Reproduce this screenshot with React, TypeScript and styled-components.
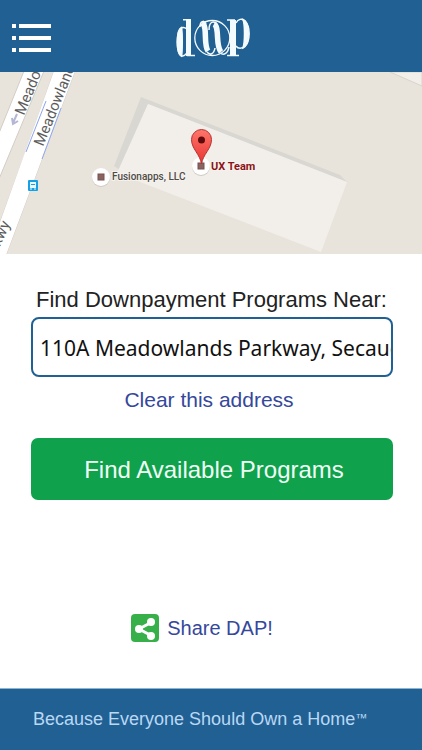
import React from "react";
import styled, { createGlobalStyle } from "styled-components";

const GlobalStyle = createGlobalStyle`
  * { box-sizing: border-box; }
  body { margin: 0; background: #fff; font-family: "Liberation Sans", Arial, sans-serif; }
`;

const Page = styled.div`
  min-height: 100vh;
  display: flex;
  flex-direction: column;
`;

const Header = styled.header`
  height: 72px;
  display: grid;
  grid-template-columns: 1fr auto 1fr;
  align-items: center;
  padding: 4px 12px 0;
  background: #216093;
`;

const MenuButton = styled.button`
  justify-self: start;
  display: flex;
  padding: 0;
  border: 0;
  background: none;
  cursor: pointer;
`;

const Logo = styled.svg`
  display: block;
`;

const MapView = styled.svg`
  display: block;
  width: 100%;
  height: 182px;
  background: #e8e4dc;
`;

const MapLabel = styled.text`
  font-family: Roboto, sans-serif;
  font-size: 10px;
  font-weight: 500;
  fill: #4f4b48;
  stroke: #f5f2ed;
  stroke-width: 2px;
  paint-order: stroke;
`;

const SelectedLabel = styled(MapLabel)`
  font-size: 11px;
  font-weight: 700;
  fill: #8c1318;
`;

const StreetLabel = styled.text`
  font-family: Roboto, sans-serif;
  font-size: 15px;
  fill: #5c5c5c;
`;

const Main = styled.main`
  flex: 1;
  display: flex;
  flex-direction: column;
  align-items: center;
  padding: 31px 29px 44px 31px;
`;

const SearchForm = styled.form`
  width: 100%;
  display: flex;
  flex-direction: column;
  align-items: center;
`;

const AddressLabel = styled.label`
  align-self: flex-start;
  padding-left: 5px;
  font-size: 22px;
  line-height: 30px;
  color: #222;
  white-space: nowrap;
  margin-bottom: 2px;
`;

const AddressInput = styled.input`
  width: 100%;
  height: 60px;
  padding: 2px 0 0 7px;
  border: 2px solid #216093;
  border-radius: 8px;
  background: #fff;
  color: #111;
  font-family: "Noto Sans", sans-serif;
  font-size: 21px;
`;

const ClearButton = styled.button`
  margin: 9px 0 24px;
  padding: 0 6px 0 0;
  border: 0;
  background: none;
  color: #35489b;
  font-family: inherit;
  font-size: 21px;
  line-height: 28px;
  cursor: pointer;
`;

const FindButton = styled.button`
  width: 100%;
  height: 62px;
  border: 0;
  border-radius: 7px;
  padding: 2px 0 0 4px;
  background: #0fa14c;
  color: #f0fff5;
  font-family: inherit;
  font-size: 24px;
  cursor: pointer;
`;

const ShareLink = styled.a`
  margin-top: auto;
  padding-right: 20px;
  display: flex;
  align-items: center;
  gap: 8px;
  color: #35489b;
  font-size: 20px;
  line-height: 32px;
  text-decoration: none;
`;

const Footer = styled.footer`
  height: 62px;
  padding-left: 33px;
  border-top: 1px solid #8db4d3;
  background: #216093;
  color: #b9d8f4;
  font-size: 18px;
  line-height: 60px;
  white-space: nowrap;
`;

const TradeMark = styled.sup`
  font-size: 12px;
  line-height: 0;
  vertical-align: 3px;
`;

function MenuIcon() {
  return (
    <svg width="39" height="28" viewBox="0 0 39 28" fill="#fff" aria-hidden="true">
      {[0, 12, 24].map((y) => (
        <g key={y}>
          <rect x="0" y={y} width="4" height="4" />
          <rect x="7" y={y} width="32" height="4" />
        </g>
      ))}
    </svg>
  );
}

function BrandMark() {
  return (
    <Logo width="78" height="40" viewBox="0 0 78 40" role="img" aria-label="DAP" fill="none" stroke="#f4fbff">
      <circle cx="40.300" cy="20" r="17.500" strokeWidth="1.300" />
      <path d="M15 11C12 8.500 9 9 7.500 12C4.500 18 4.500 30 7.500 36C9 39 12 38.500 15 35" strokeWidth="1.500" />
      <path d="M9.500 9.500C4 12 4 36 9.500 38.300C10.500 34 10.500 14 9.500 9.500Z" fill="#f4fbff" strokeWidth="1.500" />
      <rect x="14" y="1" width="5" height="37" fill="#f4fbff" stroke="none" />
      <path d="M11 1.700H19M15 37.500H23" strokeWidth="1.500" />
      <path d="M28 9C28 3 32 2 34 6" strokeWidth="1.500" />
      <path d="M30 5C36 8 31 26 36 33" strokeWidth="5.500" />
      <path d="M35 34C38 38 42 36 43 30" strokeWidth="1.500" />
      <path d="M37 12C37 4 41 2 45 6" strokeWidth="1.500" />
      <path d="M42 6C48 9 43 27 49 34" strokeWidth="5.500" />
      <path d="M48 35C52 38 56 35 57 29" strokeWidth="1.500" />
      <rect x="58" y="2" width="6" height="36" fill="#f4fbff" stroke="none" />
      <path d="M55 2H63M55 37.500H67" strokeWidth="1.500" />
      <path d="M64 5C66 1 70 0 73 3C79 9 78 24 73 28C70 31 66 31 64 28" strokeWidth="1.500" />
      <path d="M71 1.500C78 4 78 27 71 30C73 24 73 7 71 1.500Z" fill="#f4fbff" strokeWidth="1.500" />
    </Logo>
  );
}

function PlaceDot({ x, y }: { x: number; y: number }) {
  return (
    <g transform={`translate(${x} ${y})`}>
      <circle cy="1" r="9" fill="#cfcac3" />
      <circle r="9" fill="#fff" />
      <rect x="-3" y="-3" width="6" height="6" fill="#8a6460" stroke="#76534f" />
    </g>
  );
}

function StreetMap() {
  return (
    <MapView viewBox="0 0 422 182" preserveAspectRatio="xMidYMid slice" role="img" aria-label="Map around 110A Meadowlands Parkway">
      <defs>
        <linearGradient id="pinFill" x1="0" y1="0" x2="0" y2="1">
          <stop offset="0" stopColor="#ff766b" />
          <stop offset="1" stopColor="#e8322f" />
        </linearGradient>
      </defs>
      <rect width="422" height="182" fill="#e8e4dc" />
      <g fill="#fff" stroke="#d2cdc5">
        <path d="M24 -1L-1 61V107L44 -1Z" />
        <path d="M54 -1L26 79L-1 153M75 -1L42 87L6 183" fill="none" />
        <path d="M54 -1L-1 153V198L6 183L42 87L75 -1Z" stroke="none" />
      </g>
      <path d="M46 29L26 80M61 36L42 87" stroke="#8da5ed" fill="none" />
      <path d="M141 25L340 103L347 110L148 32L120 98L114 94Z" fill="#d8d7d1" />
      <path d="M148 32L347 110L321 180L117 101Z" fill="#f2efea" />
      <path d="M390 0H422V14Z" fill="#f2efea" stroke="#d8d4cc" />
      <StreetLabel transform="translate(24 44) rotate(-68)">Meadowlands</StreetLabel>
      <StreetLabel transform="translate(43 75) rotate(-68)">Meadowlands</StreetLabel>
      <StreetLabel transform="translate(-4 184) rotate(-66)">Pkwy</StreetLabel>
      <path d="M17 42L13 51M12 46L13 52L18 49" stroke="#b4b6d4" strokeWidth="2" fill="none" />
      <rect x="28" y="108" width="10" height="11" rx="1" fill="#17a1e5" />
      <path d="M30 110H36V116H30Z" fill="#e9f8ff" />
      <path d="M31 112H35V113H31Z" fill="#17a1e5" />
      <path d="M31 116V118M35 116V118" stroke="#e9f8ff" />
      <PlaceDot x={101} y={105} />
      <PlaceDot x={201} y={94} />
      <path
        d="M201.500 92C200 82 191.500 77 191.500 67.500A10 10 0 0 1 211.500 67.500C211.500 77 203 82 201.500 92Z"
        fill="url(#pinFill)"
        stroke="#b43331"
      />
      <circle cx="201.500" cy="68" r="3.500" fill="#5d0b0c" />
      <MapLabel x="112" y="108">Fusionapps, LLC</MapLabel>
      <SelectedLabel x="211" y="98">UX Team</SelectedLabel>
    </MapView>
  );
}

function ShareIcon() {
  return (
    <svg width="28" height="28" viewBox="0 0 28 28" aria-hidden="true">
      <rect width="28" height="28" rx="4" fill="#37b04a" />
      <path d="M21 8L8 15L21 22" fill="none" stroke="#fff" strokeWidth="3" />
      <g fill="#fff">
        <circle cx="20" cy="8" r="4" />
        <circle cx="8" cy="15" r="4" />
        <circle cx="20" cy="22" r="4" />
      </g>
    </svg>
  );
}

export default function App() {
  const [address, setAddress] = React.useState("110A Meadowlands Parkway, Secaucus, NJ");
  return (
    <Page>
      <GlobalStyle />
      <Header>
        <MenuButton type="button" aria-label="Menu">
          <MenuIcon />
        </MenuButton>
        <BrandMark />
      </Header>
      <StreetMap />
      <Main>
        <SearchForm onSubmit={(e) => e.preventDefault()}>
          <AddressLabel htmlFor="address">Find Downpayment Programs Near:</AddressLabel>
          <AddressInput id="address" value={address} onChange={(e) => setAddress(e.target.value)} />
          <ClearButton type="button" onClick={() => setAddress("")}>
            Clear this address
          </ClearButton>
          <FindButton type="submit">Find Available Programs</FindButton>
        </SearchForm>
        <ShareLink href="#share">
          <ShareIcon />
          Share DAP!
        </ShareLink>
      </Main>
      <Footer>
        Because Everyone Should Own a Home<TradeMark>™</TradeMark>
      </Footer>
    </Page>
  );
}
